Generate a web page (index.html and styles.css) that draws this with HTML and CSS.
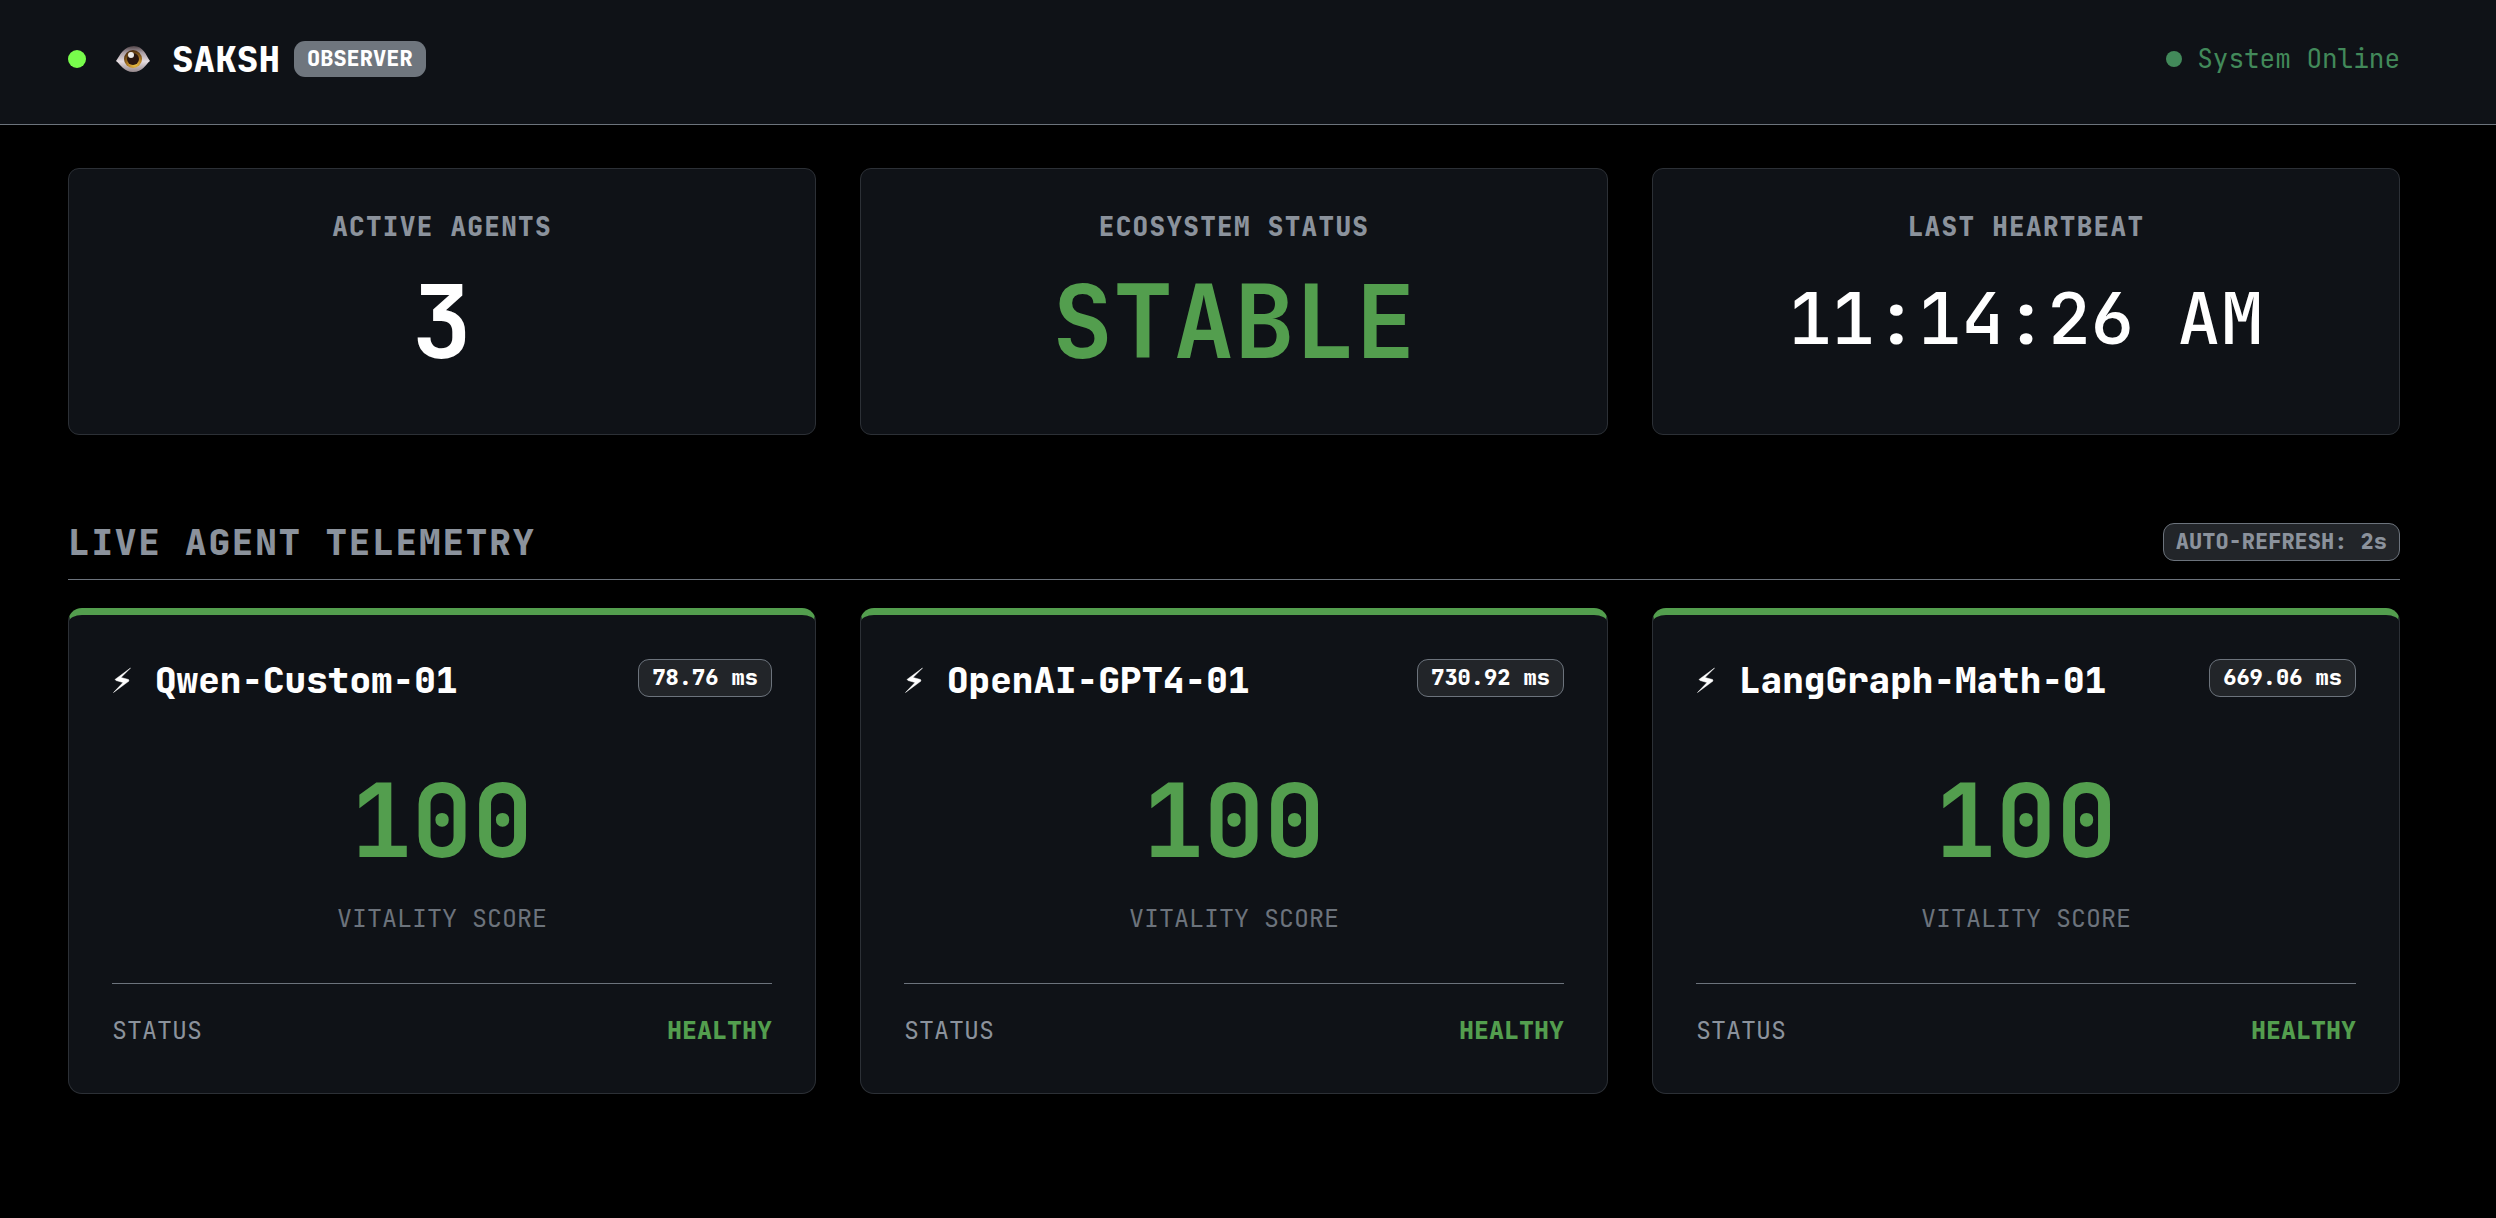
FILE: index.html
```html
<!DOCTYPE html>
<html lang="en">
<head>
<meta charset="utf-8">
<meta name="viewport" content="width=device-width, initial-scale=1">
<title>SAKSH Observer</title>
<link rel="stylesheet" href="styles.css">
</head>
<body>
<svg class="defs" aria-hidden="true">
  <symbol id="bolt" viewBox="0 0 20 26">
    <path d="M18.500 1 3 12.500l1 1 7 2L1.500 25.500 17 14l-.5-1.500L9 10.500z" stroke="currentColor" stroke-width=".5" stroke-linejoin="round"/>
  </symbol>
</svg>
<header class="topbar">
  <div class="brand">
    <span class="pulse"></span>
    <svg class="eye" viewBox="0 0 36 28" aria-hidden="true">
      <defs>
        <linearGradient id="white" x1="0" y1="0" x2="0" y2="1">
          <stop offset="0" stop-color="#4f4246"/>
          <stop offset=".25" stop-color="#a89ca2"/>
          <stop offset=".6" stop-color="#e6dde1"/>
          <stop offset="1" stop-color="#94878b"/>
        </linearGradient>
        <radialGradient id="iris" cx="60%" cy="80%" r="75%">
          <stop offset="0" stop-color="#edc448"/>
          <stop offset=".5" stop-color="#b98427"/>
          <stop offset="1" stop-color="#503010"/>
        </radialGradient>
      </defs>
      <path d="M1 16C5 10 9 1 19 1c9 0 12 9 16 15-5 4-7 11-17 11C9 27 6 20 1 16z" fill="url(#white)"/>
      <circle cx="18" cy="14" r="9" fill="url(#iris)"/>
      <circle cx="18" cy="14" r="6" fill="#2a1710"/>
      <circle cx="16" cy="10" r="3" fill="#fff" opacity=".9"/>
    </svg>
    <h1 class="brand-name">SAKSH</h1>
    <span class="badge badge-solid">OBSERVER</span>
  </div>
  <p class="system"><span class="system-dot"></span>System Online</p>
</header>
<main class="page">
  <section class="grid">
    <article class="card stat">
      <h2 class="stat-label">ACTIVE AGENTS</h2>
      <p class="figure">3</p>
    </article>
    <article class="card stat">
      <h2 class="stat-label">ECOSYSTEM STATUS</h2>
      <p class="figure good">STABLE</p>
    </article>
    <article class="card stat">
      <h2 class="stat-label">LAST HEARTBEAT</h2>
      <p class="clock">11:14:26 AM</p>
    </article>
  </section>
  <div class="section-head">
    <h2 class="section-title">LIVE AGENT TELEMETRY</h2>
    <span class="badge badge-muted">AUTO-REFRESH: 2s</span>
  </div>
  <section class="grid">
    <article class="card agent">
      <div class="agent-head">
        <h3 class="agent-name"><svg class="bolt" aria-hidden="true"><use href="#bolt"/></svg>Qwen-Custom-01</h3>
        <span class="badge">78.76 ms</span>
      </div>
      <p class="figure good">100</p>
      <p class="caption">VITALITY SCORE</p>
      <div class="agent-foot"><span>STATUS</span><strong class="good">HEALTHY</strong></div>
    </article>
    <article class="card agent">
      <div class="agent-head">
        <h3 class="agent-name"><svg class="bolt" aria-hidden="true"><use href="#bolt"/></svg>OpenAI-GPT4-01</h3>
        <span class="badge">730.92 ms</span>
      </div>
      <p class="figure good">100</p>
      <p class="caption">VITALITY SCORE</p>
      <div class="agent-foot"><span>STATUS</span><strong class="good">HEALTHY</strong></div>
    </article>
    <article class="card agent">
      <div class="agent-head">
        <h3 class="agent-name"><svg class="bolt" aria-hidden="true"><use href="#bolt"/></svg>LangGraph-Math-01</h3>
        <span class="badge">669.06 ms</span>
      </div>
      <p class="figure good">100</p>
      <p class="caption">VITALITY SCORE</p>
      <div class="agent-foot"><span>STATUS</span><strong class="good">HEALTHY</strong></div>
    </article>
  </section>
</main>
</body>
</html>
```
FILE: styles.css
```css
:root {
  --panel: #0f1217;
  --edge: #2c3036;
  --line: #6c737c;
  --muted: #8b929c;
  --good: #539e4e;
}

* {
  box-sizing: border-box;
}

body,
h1,
h2,
h3,
p {
  margin: 0;
}

body {
  background: #000;
  color: #fff;
  font-family: "JetBrains Mono", "DejaVu Sans Mono", monospace;
  font-size: 25px;
  line-height: 40px;
}

h1,
h2,
h3,
strong {
  font-weight: 800;
}

.defs {
  display: none;
}

.topbar {
  display: flex;
  align-items: center;
  justify-content: space-between;
  padding: 32px 96px 38px 68px;
  background: var(--panel);
  border-bottom: 1px solid var(--line);
}

.brand {
  display: flex;
  align-items: center;
}

.pulse {
  width: 18px;
  height: 18px;
  border-radius: 50%;
  background: #78fc4c;
}

.eye {
  width: 36px;
  height: 28px;
  margin: 0 21px 0 29px;
}

.brand-name {
  margin-right: 14px;
  font-size: 36px;
  line-height: 54px;
}

.badge {
  padding: 0 13px;
  border: 1px solid var(--line);
  border-radius: 11px;
  background: #222529;
  font-size: 22px;
  font-weight: 800;
  line-height: 36px;
  white-space: nowrap;
}

.badge-solid {
  border: 0;
  background: #6f767e;
}

.badge-muted {
  padding: 0 12px;
  color: var(--muted);
}

.system {
  display: flex;
  align-items: center;
  gap: 15px;
  color: #42895a;
  font-size: 26px;
}

.system-dot {
  width: 16px;
  height: 16px;
  border-radius: 50%;
  background: currentColor;
}

.page {
  padding: 43px 96px 43px 68px;
}

.grid {
  display: grid;
  grid-template-columns: repeat(3, minmax(0, 1fr));
  gap: 44px;
}

.card {
  border: 1px solid var(--edge);
  border-radius: 11px;
  background: var(--panel);
  text-align: center;
}

.stat {
  padding: 38px 43px 57px;
}

.stat-label {
  margin-bottom: 20px;
  color: var(--muted);
  font-size: 26px;
  letter-spacing: 0.05em;
}

.figure {
  font-size: 101px;
  font-weight: 700;
  line-height: 110px;
}

.good {
  color: var(--good);
}

.clock {
  font-size: 72px;
  font-weight: 500;
  line-height: 104px;
}

.section-head {
  display: flex;
  align-items: center;
  justify-content: space-between;
  margin: 85px 0 28px;
  padding-bottom: 15px;
  border-bottom: 1px solid var(--line);
}

.section-title {
  color: var(--muted);
  font-size: 36px;
  line-height: 44px;
  letter-spacing: 0.05em;
}

.agent {
  padding: 44px 43px 43px;
  border-top: 7px solid var(--good);
  border-radius: 14px;
}

.agent-head {
  display: flex;
  align-items: flex-start;
  justify-content: space-between;
  margin-bottom: 65px;
}

.agent-name {
  display: flex;
  align-items: center;
  gap: 23px;
  font-size: 36px;
  line-height: 42px;
}

.bolt {
  width: 20px;
  height: 26px;
  fill: currentColor;
}

.caption {
  margin: 22px 0 45px;
  color: #6c737c;
}

.agent-foot {
  display: flex;
  justify-content: space-between;
  padding-top: 26px;
  border-top: 1px solid var(--line);
  color: var(--muted);
}

.agent-foot .good {
  color: var(--good);
}
```
